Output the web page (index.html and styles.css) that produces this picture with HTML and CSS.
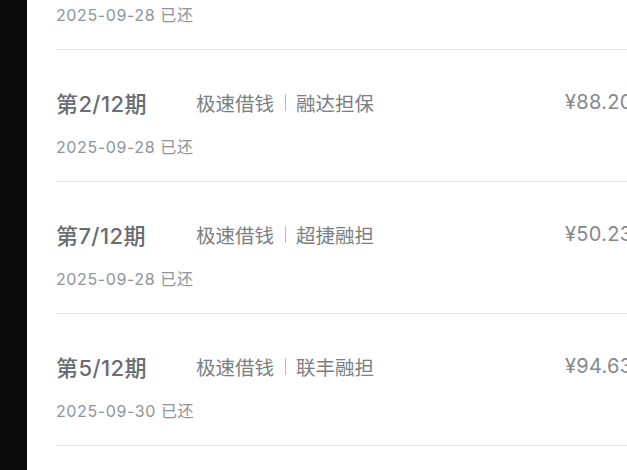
FILE: index.html
```html
<!DOCTYPE html>
<html lang="zh-CN">
<head>
    <meta charset="UTF-8">
    <meta name="viewport" content="width=device-width, initial-scale=1.0">
    <title>还款记录</title>
    <link rel="stylesheet" href="styles.css">
</head>
<body>
    <div class="edge"></div>

    <div class="panel">
        <!-- 还款记录列表 (верх прокручен) -->
        <ul class="records">
            <li class="record record-tail">
                <div class="record-date">2025-09-28 已还</div>
            </li>
            <li class="record">
                <div class="record-head">
                    <span class="period">第2/12期</span>
                    <span class="product">极速借钱<i class="sep"></i>融达担保</span>
                    <span class="amount">¥88.20</span>
                </div>
                <div class="record-date">2025-09-28 已还</div>
            </li>
            <li class="record">
                <div class="record-head">
                    <span class="period">第7/12期</span>
                    <span class="product">极速借钱<i class="sep"></i>超捷融担</span>
                    <span class="amount">¥50.23</span>
                </div>
                <div class="record-date">2025-09-28 已还</div>
            </li>
            <li class="record">
                <div class="record-head">
                    <span class="period">第5/12期</span>
                    <span class="product">极速借钱<i class="sep"></i>联丰融担</span>
                    <span class="amount">¥94.63</span>
                </div>
                <div class="record-date">2025-09-30 已还</div>
            </li>
        </ul>
    </div>
</body>
</html>
```

FILE: styles.css
```css
/* Основа */
html, body {
    margin: 0;
    padding: 0;
    height: 100%;
    overflow: hidden;
}

body {
    display: flex;
    background: #fff;
    font-family: Inter, "Noto Sans CJK SC", sans-serif;
    white-space: nowrap;
}

.edge {
    width: 27px;
    flex: none;
    background: #0a0a0a;
}

.panel {
    flex: 1;
    padding-left: 29px;
    background: #fff;
}

.records {
    list-style: none;
    margin: 0;
    padding: 0;
}

.record {
    padding: 36px 0 23px;
    border-bottom: 1px solid #e7e7e9;
}

.record-tail {
    padding-top: 4px;
}

.record-tail .record-date {
    margin-top: 0;
}

.record-head {
    display: grid;
    grid-template-columns: 140px 369px auto;
    align-items: center;
    height: 30px;
}

.period {
    font-size: 22px;
    font-weight: 500;
    letter-spacing: 0.4px;
    color: #696c71;
}

.product {
    display: flex;
    align-items: center;
    font-size: 19.5px;
    color: #7b7e83;
}

.sep {
    width: 1px;
    height: 17px;
    margin: 0 10px 0 11px;
    background: #b8babd;
}

.amount {
    font-size: 20px;
    letter-spacing: 0.3px;
    color: #85888d;
}

.record-date {
    margin-top: 20px;
    line-height: 22px;
    font-size: 16px;
    letter-spacing: 0.6px;
    color: #909398;
}
```
